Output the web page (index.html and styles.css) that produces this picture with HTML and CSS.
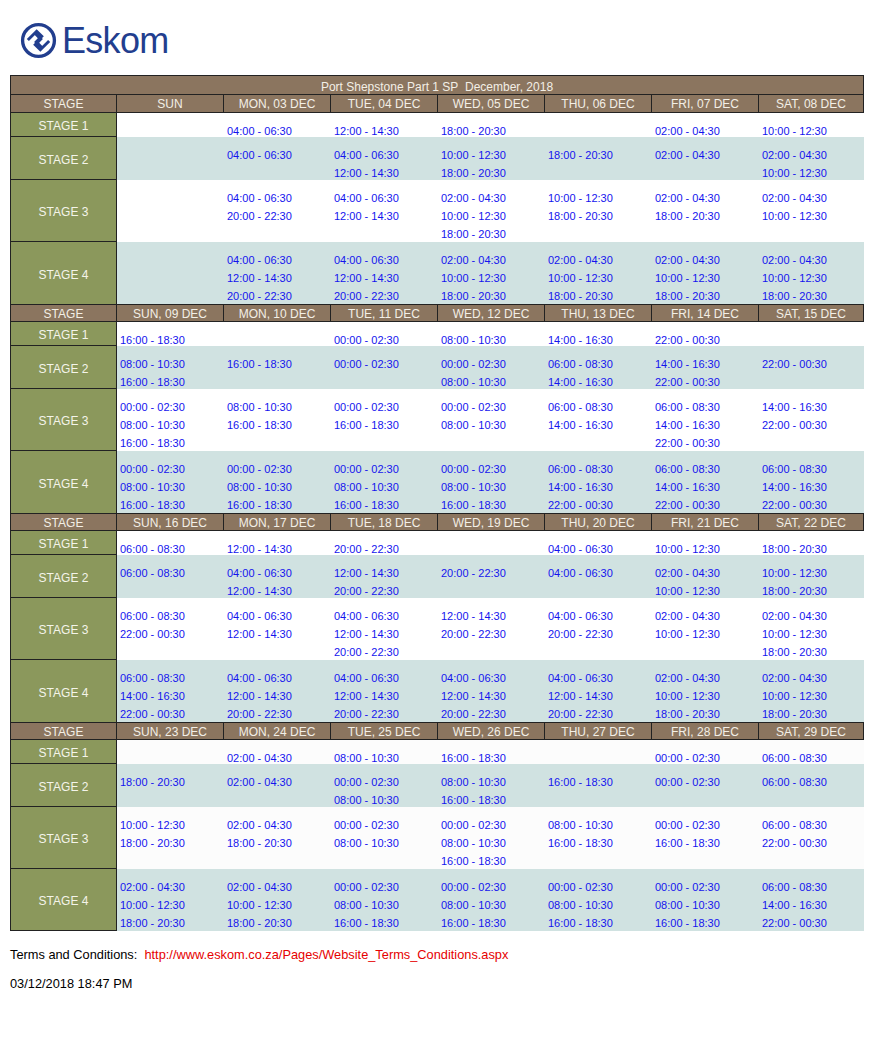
FILE: index.html
```html
<!DOCTYPE html>
<html lang="en">
<head>
<meta charset="utf-8">
<title>Eskom Load Shedding Schedule</title>
<link rel="stylesheet" href="styles.css">
</head>
<body>
<header class="brand">
  <svg class="brand-mark" viewBox="0 0 40 40" aria-hidden="true">
    <circle cx="20" cy="20" r="17.2" fill="none" stroke="#223e8e" stroke-width="3.6"/>
    <path d="M8.5 19.5 L18 10 L23.5 15.5 L17.5 21.5 L23.5 27.5" fill="none" stroke="#223e8e" stroke-width="3.2" stroke-linejoin="miter"/>
    <path d="M31.5 20.5 L22 30 L16.5 24.5 L22.5 18.5 L16.5 12.5" fill="none" stroke="#223e8e" stroke-width="3.2" stroke-linejoin="miter"/>
  </svg>
  <span class="brand-name">Eskom</span>
</header>

<main class="sched">
  <div class="title">Port Shepstone Part 1 SP&nbsp; December, 2018</div>

  <!-- Block 1 -->
  <div class="h first">STAGE</div><div class="h">SUN</div><div class="h">MON, 03 DEC</div><div class="h">TUE, 04 DEC</div><div class="h">WED, 05 DEC</div><div class="h">THU, 06 DEC</div><div class="h">FRI, 07 DEC</div><div class="h">SAT, 08 DEC</div>

  <div class="s">STAGE 1</div>
  <div class="t"></div>
  <div class="t">04:00 - 06:30</div>
  <div class="t">12:00 - 14:30</div>
  <div class="t">18:00 - 20:30</div>
  <div class="t"></div>
  <div class="t">02:00 - 04:30</div>
  <div class="t">10:00 - 12:30</div>

  <div class="s">STAGE 2</div>
  <div class="t a"></div>
  <div class="t a">04:00 - 06:30</div>
  <div class="t a">04:00 - 06:30<br>12:00 - 14:30</div>
  <div class="t a">10:00 - 12:30<br>18:00 - 20:30</div>
  <div class="t a">18:00 - 20:30</div>
  <div class="t a">02:00 - 04:30</div>
  <div class="t a">02:00 - 04:30<br>10:00 - 12:30</div>

  <div class="s">STAGE 3</div>
  <div class="t"></div>
  <div class="t">04:00 - 06:30<br>20:00 - 22:30</div>
  <div class="t">04:00 - 06:30<br>12:00 - 14:30</div>
  <div class="t">02:00 - 04:30<br>10:00 - 12:30<br>18:00 - 20:30</div>
  <div class="t">10:00 - 12:30<br>18:00 - 20:30</div>
  <div class="t">02:00 - 04:30<br>18:00 - 20:30</div>
  <div class="t">02:00 - 04:30<br>10:00 - 12:30</div>

  <div class="s s4">STAGE 4</div>
  <div class="t a"></div>
  <div class="t a">04:00 - 06:30<br>12:00 - 14:30<br>20:00 - 22:30</div>
  <div class="t a">04:00 - 06:30<br>12:00 - 14:30<br>20:00 - 22:30</div>
  <div class="t a">02:00 - 04:30<br>10:00 - 12:30<br>18:00 - 20:30</div>
  <div class="t a">02:00 - 04:30<br>10:00 - 12:30<br>18:00 - 20:30</div>
  <div class="t a">02:00 - 04:30<br>10:00 - 12:30<br>18:00 - 20:30</div>
  <div class="t a">02:00 - 04:30<br>10:00 - 12:30<br>18:00 - 20:30</div>

  <!-- Block 2 -->
  <div class="h first">STAGE</div><div class="h">SUN, 09 DEC</div><div class="h">MON, 10 DEC</div><div class="h">TUE, 11 DEC</div><div class="h">WED, 12 DEC</div><div class="h">THU, 13 DEC</div><div class="h">FRI, 14 DEC</div><div class="h">SAT, 15 DEC</div>

  <div class="s">STAGE 1</div>
  <div class="t">16:00 - 18:30</div>
  <div class="t"></div>
  <div class="t">00:00 - 02:30</div>
  <div class="t">08:00 - 10:30</div>
  <div class="t">14:00 - 16:30</div>
  <div class="t">22:00 - 00:30</div>
  <div class="t"></div>

  <div class="s">STAGE 2</div>
  <div class="t a">08:00 - 10:30<br>16:00 - 18:30</div>
  <div class="t a">16:00 - 18:30</div>
  <div class="t a">00:00 - 02:30</div>
  <div class="t a">00:00 - 02:30<br>08:00 - 10:30</div>
  <div class="t a">06:00 - 08:30<br>14:00 - 16:30</div>
  <div class="t a">14:00 - 16:30<br>22:00 - 00:30</div>
  <div class="t a">22:00 - 00:30</div>

  <div class="s">STAGE 3</div>
  <div class="t">00:00 - 02:30<br>08:00 - 10:30<br>16:00 - 18:30</div>
  <div class="t">08:00 - 10:30<br>16:00 - 18:30</div>
  <div class="t">00:00 - 02:30<br>16:00 - 18:30</div>
  <div class="t">00:00 - 02:30<br>08:00 - 10:30</div>
  <div class="t">06:00 - 08:30<br>14:00 - 16:30</div>
  <div class="t">06:00 - 08:30<br>14:00 - 16:30<br>22:00 - 00:30</div>
  <div class="t">14:00 - 16:30<br>22:00 - 00:30</div>

  <div class="s s4">STAGE 4</div>
  <div class="t a">00:00 - 02:30<br>08:00 - 10:30<br>16:00 - 18:30</div>
  <div class="t a">00:00 - 02:30<br>08:00 - 10:30<br>16:00 - 18:30</div>
  <div class="t a">00:00 - 02:30<br>08:00 - 10:30<br>16:00 - 18:30</div>
  <div class="t a">00:00 - 02:30<br>08:00 - 10:30<br>16:00 - 18:30</div>
  <div class="t a">06:00 - 08:30<br>14:00 - 16:30<br>22:00 - 00:30</div>
  <div class="t a">06:00 - 08:30<br>14:00 - 16:30<br>22:00 - 00:30</div>
  <div class="t a">06:00 - 08:30<br>14:00 - 16:30<br>22:00 - 00:30</div>

  <!-- Block 3 -->
  <div class="h first">STAGE</div><div class="h">SUN, 16 DEC</div><div class="h">MON, 17 DEC</div><div class="h">TUE, 18 DEC</div><div class="h">WED, 19 DEC</div><div class="h">THU, 20 DEC</div><div class="h">FRI, 21 DEC</div><div class="h">SAT, 22 DEC</div>

  <div class="s">STAGE 1</div>
  <div class="t">06:00 - 08:30</div>
  <div class="t">12:00 - 14:30</div>
  <div class="t">20:00 - 22:30</div>
  <div class="t"></div>
  <div class="t">04:00 - 06:30</div>
  <div class="t">10:00 - 12:30</div>
  <div class="t">18:00 - 20:30</div>

  <div class="s">STAGE 2</div>
  <div class="t a">06:00 - 08:30</div>
  <div class="t a">04:00 - 06:30<br>12:00 - 14:30</div>
  <div class="t a">12:00 - 14:30<br>20:00 - 22:30</div>
  <div class="t a">20:00 - 22:30</div>
  <div class="t a">04:00 - 06:30</div>
  <div class="t a">02:00 - 04:30<br>10:00 - 12:30</div>
  <div class="t a">10:00 - 12:30<br>18:00 - 20:30</div>

  <div class="s">STAGE 3</div>
  <div class="t">06:00 - 08:30<br>22:00 - 00:30</div>
  <div class="t">04:00 - 06:30<br>12:00 - 14:30</div>
  <div class="t">04:00 - 06:30<br>12:00 - 14:30<br>20:00 - 22:30</div>
  <div class="t">12:00 - 14:30<br>20:00 - 22:30</div>
  <div class="t">04:00 - 06:30<br>20:00 - 22:30</div>
  <div class="t">02:00 - 04:30<br>10:00 - 12:30</div>
  <div class="t">02:00 - 04:30<br>10:00 - 12:30<br>18:00 - 20:30</div>

  <div class="s s4">STAGE 4</div>
  <div class="t a">06:00 - 08:30<br>14:00 - 16:30<br>22:00 - 00:30</div>
  <div class="t a">04:00 - 06:30<br>12:00 - 14:30<br>20:00 - 22:30</div>
  <div class="t a">04:00 - 06:30<br>12:00 - 14:30<br>20:00 - 22:30</div>
  <div class="t a">04:00 - 06:30<br>12:00 - 14:30<br>20:00 - 22:30</div>
  <div class="t a">04:00 - 06:30<br>12:00 - 14:30<br>20:00 - 22:30</div>
  <div class="t a">02:00 - 04:30<br>10:00 - 12:30<br>18:00 - 20:30</div>
  <div class="t a">02:00 - 04:30<br>10:00 - 12:30<br>18:00 - 20:30</div>

  <!-- Block 4 -->
  <div class="h first">STAGE</div><div class="h">SUN, 23 DEC</div><div class="h">MON, 24 DEC</div><div class="h">TUE, 25 DEC</div><div class="h">WED, 26 DEC</div><div class="h">THU, 27 DEC</div><div class="h">FRI, 28 DEC</div><div class="h">SAT, 29 DEC</div>

  <div class="s">STAGE 1</div>
  <div class="t f"></div>
  <div class="t f">02:00 - 04:30</div>
  <div class="t f">08:00 - 10:30</div>
  <div class="t f">16:00 - 18:30</div>
  <div class="t f"></div>
  <div class="t f">00:00 - 02:30</div>
  <div class="t f">06:00 - 08:30</div>

  <div class="s">STAGE 2</div>
  <div class="t a">18:00 - 20:30</div>
  <div class="t a">02:00 - 04:30</div>
  <div class="t a">00:00 - 02:30<br>08:00 - 10:30</div>
  <div class="t a">08:00 - 10:30<br>16:00 - 18:30</div>
  <div class="t a">16:00 - 18:30</div>
  <div class="t a">00:00 - 02:30</div>
  <div class="t a">06:00 - 08:30</div>

  <div class="s">STAGE 3</div>
  <div class="t f">10:00 - 12:30<br>18:00 - 20:30</div>
  <div class="t f">02:00 - 04:30<br>18:00 - 20:30</div>
  <div class="t f">00:00 - 02:30<br>08:00 - 10:30</div>
  <div class="t f">00:00 - 02:30<br>08:00 - 10:30<br>16:00 - 18:30</div>
  <div class="t f">08:00 - 10:30<br>16:00 - 18:30</div>
  <div class="t f">00:00 - 02:30<br>16:00 - 18:30</div>
  <div class="t f">06:00 - 08:30<br>22:00 - 00:30</div>

  <div class="s s4 last">STAGE 4</div>
  <div class="t a">02:00 - 04:30<br>10:00 - 12:30<br>18:00 - 20:30</div>
  <div class="t a">02:00 - 04:30<br>10:00 - 12:30<br>18:00 - 20:30</div>
  <div class="t a">00:00 - 02:30<br>08:00 - 10:30<br>16:00 - 18:30</div>
  <div class="t a">00:00 - 02:30<br>08:00 - 10:30<br>16:00 - 18:30</div>
  <div class="t a">00:00 - 02:30<br>08:00 - 10:30<br>16:00 - 18:30</div>
  <div class="t a">00:00 - 02:30<br>08:00 - 10:30<br>16:00 - 18:30</div>
  <div class="t a">06:00 - 08:30<br>14:00 - 16:30<br>22:00 - 00:30</div>
</main>

<footer class="foot">
  <p class="terms">Terms and Conditions:&nbsp; <a class="terms-link" href="#">http://www.eskom.co.za/Pages/Website_Terms_Conditions.aspx</a></p>
  <p class="stamp">03/12/2018 18:47 PM</p>
</footer>
</body>
</html>
```

FILE: styles.css
```css
* {
  box-sizing: border-box;
}

body {
  margin: 0;
  padding: 0 10px;
  background: #ffffff;
  font-family: "Liberation Sans", Arial, sans-serif;
  color: #000;
}

/* Logo */
.brand {
  display: flex;
  align-items: flex-start;
  gap: 5px;
  height: 75px;
  padding: 22px 0 0 10px;
}

.brand-mark {
  width: 37px;
  height: 37px;
  flex: none;
}

.brand-name {
  font-size: 36px;
  line-height: 37px;
  color: #223e8e;
  letter-spacing: -0.7px;
}

/* Schedule grid */
.sched {
  display: grid;
  width: 854px;
  grid-template-columns: repeat(7, 107px) 105px;
  grid-template-rows:
    19px 19px 24px 43px 62px 62px
    18px 24px 43px 62px 62px
    18px 24px 43px 62px 62px
    18px 24px 43px 62px 62px;
  font-size: 12px;
}

.title {
  grid-column: 1 / -1;
  background: #8b755f;
  color: #f3efe6;
  text-align: center;
  line-height: 18px;
  padding-top: 2px;
  border: 1px solid #222;
  border-bottom: 0;
}

.h {
  display: flex;
  align-items: center;
  justify-content: center;
  padding-top: 1px;
  background: #8b755f;
  color: #f3efe6;
  border-top: 1px solid #222;
  border-bottom: 1px solid #222;
  border-right: 1px solid #222;
  white-space: nowrap;
}

.h.first {
  border-left: 1px solid #222;
}

.s {
  display: flex;
  align-items: center;
  justify-content: center;
  padding-top: 3px;
  background: #8b985c;
  color: #f4f4ea;
  border-left: 1px solid #222;
  border-right: 1px solid #222;
  border-bottom: 1px solid #222;
}

.s.s4 {
  border-bottom: 0;
}

.s.s4.last {
  border-bottom: 1px solid #222;
}

.t {
  padding: 9px 0 0 3px;
  font-size: 11px;
  line-height: 18px;
  color: #1414ee;
  white-space: nowrap;
  background: #ffffff;
}

.t.a {
  background: #d0e2e1;
}

.t.f {
  background: #fcfcfc;
}

/* Footer */
.foot {
  font-size: 12.8px;
  line-height: 15px;
}

.terms {
  margin: 16px 0 0;
}

.terms-link {
  color: #e60000;
  text-decoration: none;
}

.stamp {
  margin: 14px 0 0;
}
```
